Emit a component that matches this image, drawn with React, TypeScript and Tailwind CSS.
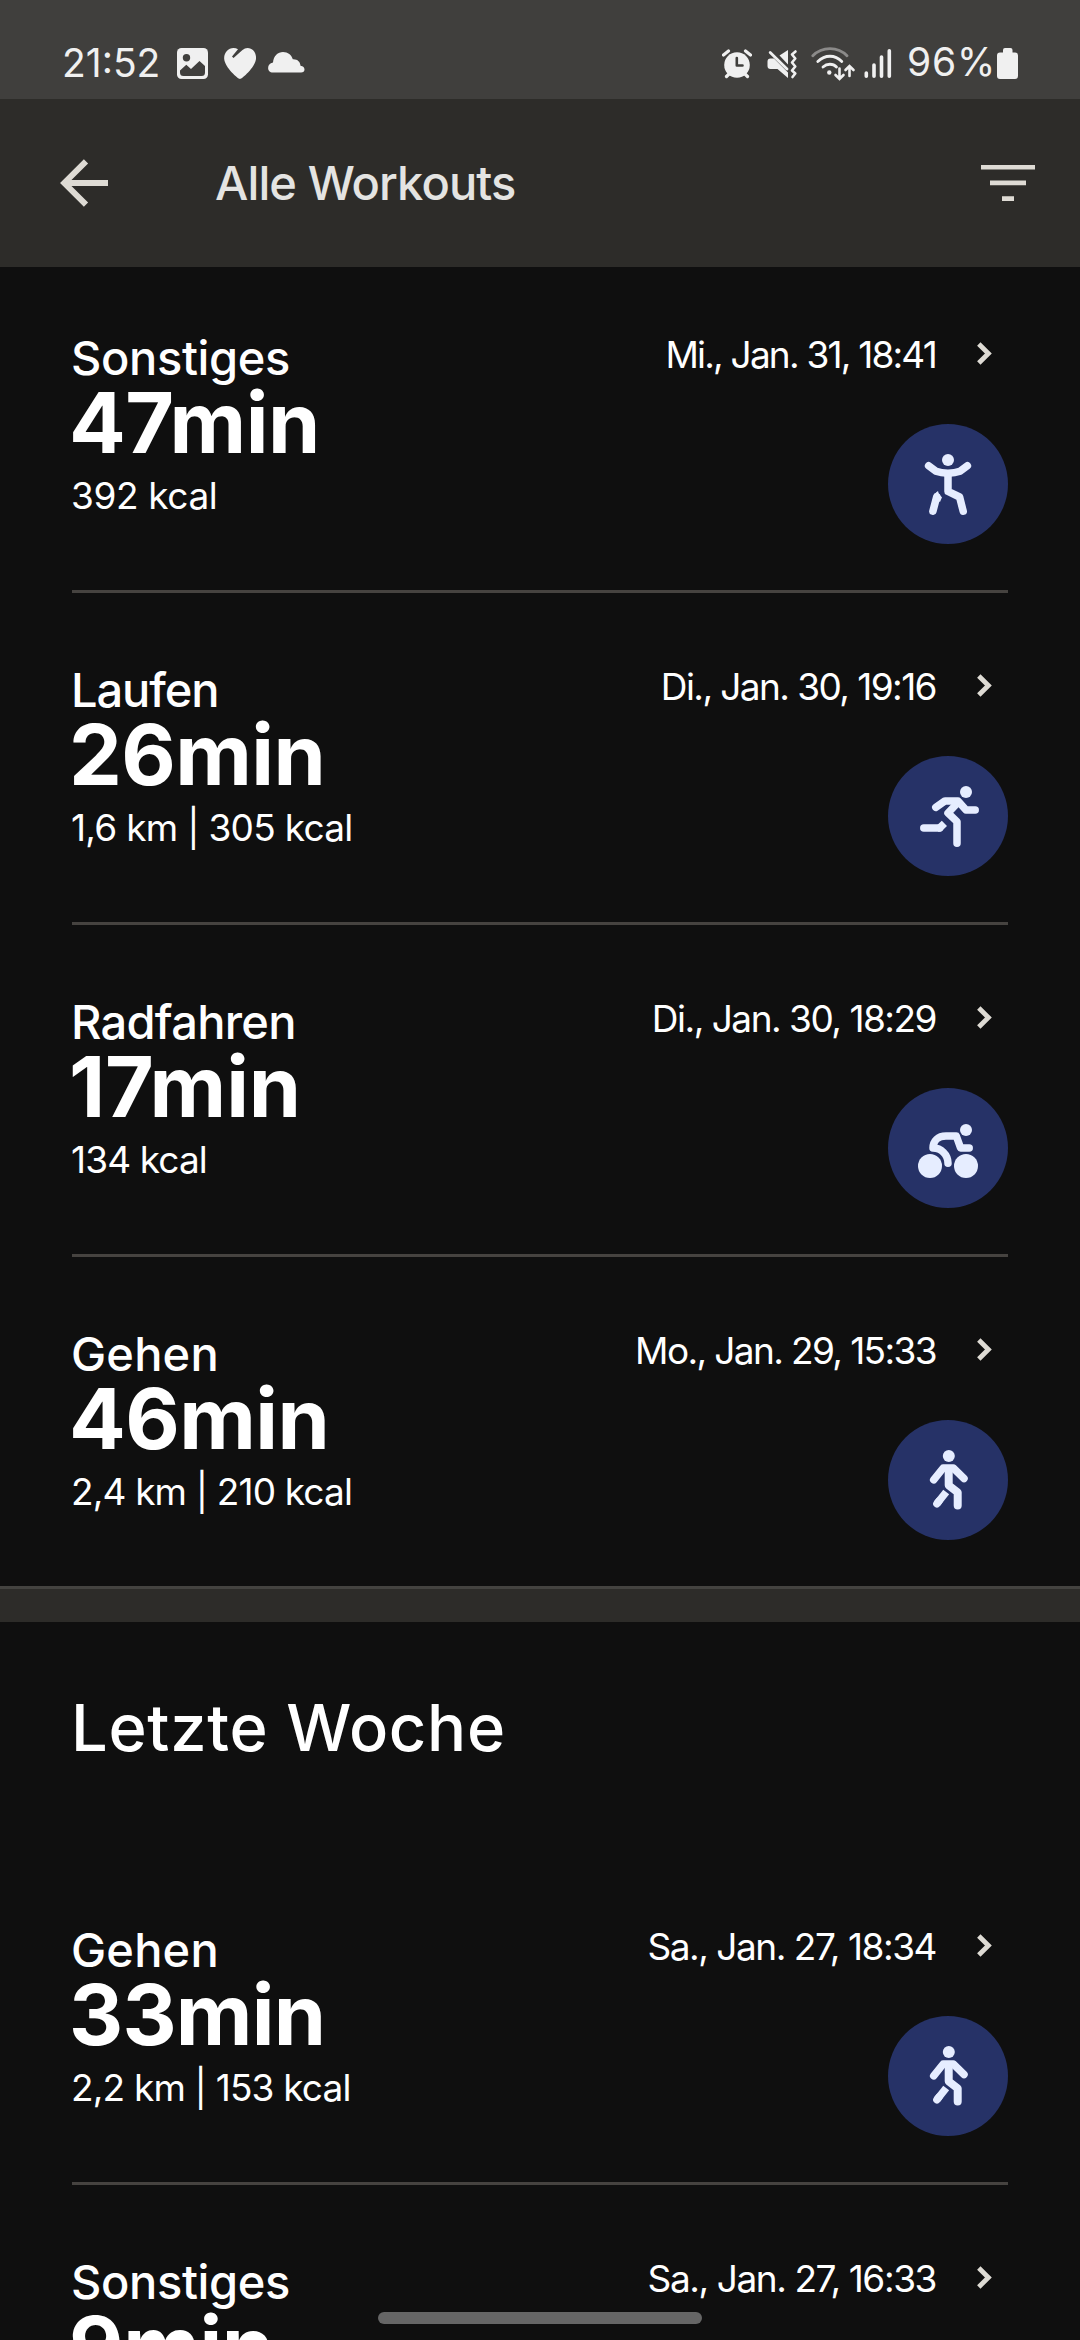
import type { ReactNode } from "react";

type Sport = "other" | "run" | "ride" | "walk";

interface Workout {
  sport: Sport;
  name: string;
  nameClass: string;
  duration: string;
  durationClass: string;
  detail: string;
  detailClass: string;
  date: string;
  dateClass: string;
}

const currentWorkouts: Workout[] = [
  {
    sport: "other",
    name: "Sonstiges",
    nameClass: "tracking-[-0.35px]",
    duration: "47min",
    durationClass: "tracking-[-0.45px]",
    detail: "392 kcal",
    detailClass: "tracking-[-0.39px]",
    date: "Mi., Jan. 31, 18:41",
    dateClass: "tracking-[-1.8px]",
  },
  {
    sport: "run",
    name: "Laufen",
    nameClass: "tracking-[-1.1px]",
    duration: "26min",
    durationClass: "tracking-[-0.6px]",
    detail: "1,6 km | 305 kcal",
    detailClass: "tracking-[-0.72px]",
    date: "Di., Jan. 30, 19:16",
    dateClass: "tracking-[-1.58px]",
  },
  {
    sport: "ride",
    name: "Radfahren",
    nameClass: "tracking-[-0.7px]",
    duration: "17min",
    durationClass: "tracking-[-0.1px]",
    detail: "134 kcal",
    detailClass: "tracking-[-0.87px]",
    date: "Di., Jan. 30, 18:29",
    dateClass: "tracking-[-1.5px]",
  },
  {
    sport: "walk",
    name: "Gehen",
    nameClass: "tracking-[0.2px]",
    duration: "46min",
    durationClass: "tracking-[-0.6px]",
    detail: "2,4 km | 210 kcal",
    detailClass: "tracking-[-0.85px]",
    date: "Mo., Jan. 29, 15:33",
    dateClass: "tracking-[-1.62px]",
  },
];

const lastWeekWorkouts: Workout[] = [
  {
    sport: "walk",
    name: "Gehen",
    nameClass: "tracking-[0.2px]",
    duration: "33min",
    durationClass: "tracking-[-0.8px]",
    detail: "2,2 km | 153 kcal",
    detailClass: "tracking-[-0.82px]",
    date: "Sa., Jan. 27, 18:34",
    dateClass: "tracking-[-1.46px]",
  },
  {
    sport: "other",
    name: "Sonstiges",
    nameClass: "tracking-[-0.35px]",
    duration: "9min",
    durationClass: "tracking-[-0.4px]",
    detail: "64 kcal",
    detailClass: "tracking-[-0.4px]",
    date: "Sa., Jan. 27, 16:33",
    dateClass: "tracking-[-1.42px]",
  },
];

const figures: Record<Sport, ReactNode> = {
  other: (
    <>
      <circle cx="60" cy="36" r="6" fill="#e6edff" stroke="none" />
      <path d="M40.6 41.7L48 47.3Q53 49.2 60 49.2T72 47.3L79.4 41.7" />
      <path d="M60 50V67.4L71.6 73L75.2 87.2" />
      <path d="M48.8 72.5L44.9 87.2" />
      <path d="M48 68.4L50 67L51 70.5L54 73.2L52 78L46 74Z" fill="#e6edff" stroke="none" />
    </>
  ),
  run: (
    <>
      <circle cx="78" cy="36" r="6" fill="#e6edff" stroke="none" />
      <path d="M47.8 51.3L57 44.9H70L78 53.9H87.2" />
      <path d="M69.5 47L60 57L69 65.6V87.2" />
      <path d="M35.8 72H51.6" />
      <path d="M50 72H51.6L56.4 67.4" strokeLinecap="butt" />
    </>
  ),
  ride: (
    <>
      <circle cx="78" cy="42" r="6" fill="#e6edff" stroke="none" />
      <circle cx="42" cy="78" r="12" fill="#e6edff" stroke="none" />
      <circle cx="78" cy="78" r="12" fill="#e6edff" stroke="none" />
      <path d="M81.2 60H72.6L68.3 48H58C50 48 45 53 45 60C53 60 60 66.5 60 75.3" />
    </>
  ),
  walk: (
    <>
      <circle cx="60.8" cy="36" r="6" fill="#e6edff" stroke="none" />
      <path d="M45.7 59.8L55.2 48H65.3L76 58.5" />
      <path d="M60.7 49V65.3L69.7 72.3V85.5" strokeWidth="8" />
      <path d="M48.9 83.8L51 81" />
      <path d="M48.9 83.8L58.2 72" strokeLinecap="butt" />
    </>
  ),
};

function SportBadge({ sport }: { sport: Sport }) {
  return (
    <div className="mt-[46px] size-[120px] rounded-full bg-[#263267]">
      <svg
        viewBox="0 0 120 120"
        className="size-full"
        fill="none"
        stroke="#e6edff"
        strokeWidth="7.5"
        strokeLinecap="round"
        strokeLinejoin="round"
      >
        {figures[sport]}
      </svg>
    </div>
  );
}

function WorkoutRow({ workout, divider }: { workout: Workout; divider: boolean }) {
  return (
    <li className="mx-[72px]">
      <div className="flex h-[329px] justify-between">
        <div className="flex flex-col whitespace-nowrap pt-[73px]">
          <span className={`-ml-px text-[47px] leading-[48px] font-medium ${workout.nameClass}`}>{workout.name}</span>
          <span className={`mt-0.5 -ml-[3px] text-[84px] leading-[78px] font-bold ${workout.durationClass}`}>
            {workout.duration}
          </span>
          <span className={`mt-2.5 -ml-px text-[37px] leading-[48px] ${workout.detailClass}`}>{workout.detail}</span>
        </div>
        <div className="flex flex-col items-end pt-[69px]">
          <div className="flex h-12 items-start whitespace-nowrap">
            <span className={`mt-px text-[37px] leading-[48px] ${workout.dateClass}`}>{workout.date}</span>
            <svg viewBox="0 0 72 48" className="h-12 w-[72px]" fill="none" stroke="#dedbd4" strokeWidth="4.8">
              <path d="M42.8 14L52.4 23.5L42.8 33" />
            </svg>
          </div>
          <SportBadge sport={workout.sport} />
        </div>
      </div>
      {divider && <div className="h-[3px] bg-[#464340]" />}
    </li>
  );
}

function StatusBar() {
  return (
    <div className="flex h-[99px] shrink-0 items-start bg-[#403f3d] text-[#f0f0f0]">
      <span className="mt-[39px] ml-[62px] w-[115px] text-[39px] leading-[48px]">21:52</span>
      <svg viewBox="0 0 31 31" className="mt-12 size-[31px]">
        <rect width="31" height="31" rx="4.5" fill="#f0f0f0" />
        <circle cx="9.5" cy="9.7" r="3.7" fill="#403f3d" />
        <path d="M3 22.5L9.3 16.8L14 21L22.5 13L28 18V24.5Q28 28 24.5 28H6.5Q3 28 3 24.5Z" fill="#403f3d" />
      </svg>
      <svg viewBox="0 0 32 32" className="mt-12 ml-4 size-8">
        <path
          d="M16 31C14 31 1 19.5 0.2 11C-0.3 5 4 0 9.5 0Q12 0 14 1.2L8 8.5L9.5 10L18.5 2Q20.8 0 23.5 0C29 0 32.5 5 32 11C31 19.5 18 31 16 31Z"
          fill="#f0f0f0"
        />
      </svg>
      <svg viewBox="0 0 37 21" className="mt-[52px] ml-3 h-[21px] w-[37px]">
        <path
          d="M5 20.5C-1.5 20.5 -1.5 11.5 5 10.5C5.5 4 10 0 15 0C20 0 23.5 3 24.8 7.3C29.5 7 32.3 10 32.5 13.8C38 14.5 37.5 20.5 33 20.5Z"
          fill="#f0f0f0"
        />
      </svg>
      <svg viewBox="0 0 30 30" className="mt-[49px] ml-[417px] size-[30px]">
        <circle cx="15" cy="16" r="12.8" fill="#f0f0f0" />
        <path
          d="M1.5 6L6.5 2M28.5 6L23.5 2M4.5 27.5L7 25M25.5 27.5L23 25"
          stroke="#f0f0f0"
          strokeWidth="3.2"
          strokeLinecap="round"
        />
        <path
          d="M14.8 9V16.5H20.5"
          stroke="#403f3d"
          strokeWidth="2.6"
          strokeLinecap="round"
          strokeLinejoin="round"
          fill="none"
        />
      </svg>
      <svg viewBox="0 0 31 30" className="mt-[49px] ml-[15px] h-[30px] w-[31px]">
        <path d="M3.5 9.5H7L21 23.5V29L10.500 20H3.5Q0.5 20 0.5 17V12.5Q0.5 9.5 3.5 9.5Z" fill="#f0f0f0" />
        <path d="M12.5 6.500L21 1V15.500Z" fill="#f0f0f0" />
        <path d="M3.2 3.5L20 20" stroke="#f0f0f0" strokeWidth="2.8" strokeLinecap="round" />
        <path
          d="M28.5 2.5L25 5.5L28.3 9.5L25 13.5L28.3 17.5L25 21.5L28.3 24.5L25.5 28"
          stroke="#f0f0f0"
          strokeWidth="2.6"
          fill="none"
          strokeLinecap="round"
          strokeLinejoin="round"
        />
      </svg>
      <svg
        viewBox="0 0 45 34"
        className="mt-[47px] ml-[13px] h-[34px] w-[45px]"
        fill="none"
        stroke="#f0f0f0"
        strokeWidth="2.8"
        strokeLinecap="round"
      >
        <path d="M1.8 8.8C11 -0.8 27 -0.8 36 8.8" stroke="#8b8a89" />
        <path d="M6.8 14.5C14 7.5 24 7.5 30.8 14.5" />
        <path d="M12 20C16 16.3 22 16.3 25.5 20" />
        <circle cx="18.3" cy="25.5" r="2.2" fill="#f0f0f0" stroke="none" />
        <path
          d="M28.5 21.5V31.5M24.5 28L28.5 32L32.5 28M38.5 29V19.5M34.5 23L38.5 19L42.5 23"
          strokeWidth="2.6"
        />
      </svg>
      <svg
        viewBox="0 0 28 30"
        className="mt-[49px] ml-2 h-[30px] w-7"
        stroke="#f0f0f0"
        strokeWidth="3.6"
        strokeLinecap="round"
      >
        <path d="M2.3 24V27.3M10 16V27.3M17.5 8V27.3M25.3 1.8V27.3" />
      </svg>
      <span className="mt-[38px] ml-[15px] w-[90px] text-[39px] leading-[48px] tracking-[0.8px]">96%</span>
      <svg viewBox="0 0 21 31" className="mt-12 h-[31px] w-[21px]" fill="#f0f0f0">
        <path d="M6 4.5V2Q6 0 8 0H13.5Q15.5 0 15.5 2V4.5H18Q21 4.5 21 7.5V28Q21 31 18 31H3Q0 31 0 28V7.5Q0 4.5 3 4.5Z" />
      </svg>
    </div>
  );
}

function TopBar() {
  return (
    <header className="flex h-42 shrink-0 items-center bg-[#2d2c29]">
      <svg viewBox="0 0 48 48" className="ml-15 size-12" fill="none" stroke="#dedbd4" strokeWidth="6">
        <path d="M48 24H5M26 2.3L4.3 24L26 45.7" />
      </svg>
      <h1 className="ml-[107px] flex-1 text-[47px] leading-[48px] font-medium tracking-[-0.89px] text-[#e4e4e2]">
        Alle Workouts
      </h1>
      <svg viewBox="0 0 54 36" className="mr-[45px] h-9 w-[54px]" fill="#dedbd4">
        <path d="M0 0H54V4.5H0ZM9 15.5H45V20.2H9ZM21 31.3H33V36H21Z" />
      </svg>
    </header>
  );
}

export default function App() {
  return (
    <div className="relative flex h-[2340px] w-[1080px] flex-col overflow-hidden bg-[#0f0f0f] font-[Inter,sans-serif] text-white">
      <StatusBar />
      <TopBar />
      <main className="-mt-1.5 shrink-0">
        <ul>
          {currentWorkouts.map((workout, i) => (
            <WorkoutRow key={workout.date} workout={workout} divider={i < currentWorkouts.length - 1} />
          ))}
        </ul>
        <div className="h-9 border-t-[3px] border-[#444340] bg-[#2d2c29]" />
        <h2 className="h-[231px] pt-[71px] pl-[71px] text-[65px] leading-[70px] font-medium tracking-[0.7px]">
          Letzte Woche
        </h2>
        <ul>
          {lastWeekWorkouts.map((workout) => (
            <WorkoutRow key={workout.date} workout={workout} divider />
          ))}
        </ul>
      </main>
      <div className="absolute bottom-4 left-1/2 h-3 w-[324px] -translate-x-1/2 rounded-full bg-[#666666]" />
    </div>
  );
}
